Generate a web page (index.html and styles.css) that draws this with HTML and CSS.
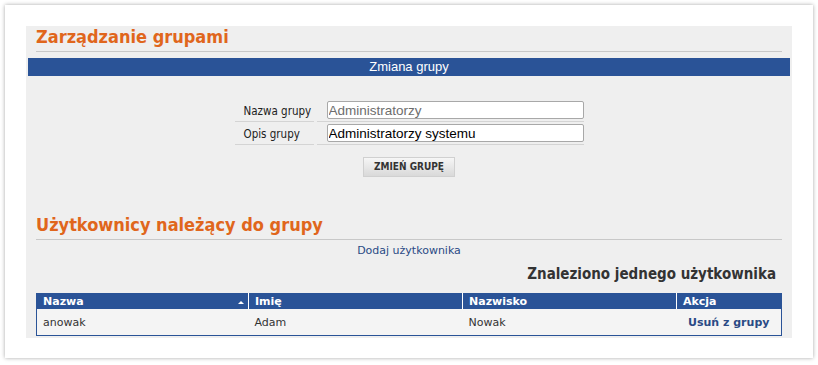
FILE: index.html
```html
<!DOCTYPE html>
<html>
	<head>
		<meta charset="utf-8">
		<title>Zarządzanie grupami</title>
		<link rel="stylesheet" href="styles.css">
	</head>
	<body>
		<div class="card">
			<div class="panel">
				<h1 class="title">Zarządzanie grupami</h1>
				<div class="bar">Zmiana grupy</div>
				<form class="group-form">
					<table class="fields">
						<tr>
							<td class="label">Nazwa grupy</td>
							<td class="field"><input type="text" class="text" value="Administratorzy" disabled></td>
						</tr>
						<tr>
							<td class="label">Opis grupy</td>
							<td class="field"><input type="text" class="text active" value="Administratorzy systemu"></td>
						</tr>
					</table>
					<div class="actions">
						<button type="button" class="button">ZMIEŃ GRUPĘ</button>
					</div>
				</form>
				<h1 class="title second">Użytkownicy należący do grupy</h1>
				<div class="add"><a href="#">Dodaj użytkownika</a></div>
				<div class="found">Znaleziono jednego użytkownika</div>
				<table class="list">
					<thead>
						<tr>
							<th class="sorted">Nazwa <span class="arrow"></span></th>
							<th>Imię</th>
							<th>Nazwisko</th>
							<th class="action">Akcja</th>
						</tr>
					</thead>
					<tbody>
						<tr>
							<td>anowak</td>
							<td>Adam</td>
							<td>Nowak</td>
							<td class="action"><a href="#">Usuń z grupy</a></td>
						</tr>
					</tbody>
				</table>
			</div>
		</div>
	</body>
</html>
```

FILE: styles.css
```css
html, body {
	margin: 0;
	background-color: #ffffff;
}

body {
	padding: 5px;
	font-family: "DejaVu Sans", Verdana, sans-serif;
	color: #333333;
}

.card {
	width: 766px;
	height: 312px;
	padding: 21px 21px 20px 21px;
	background-color: #ffffff;
	box-shadow: 0 0 4px rgba(0, 0, 0, 0.35);
}

.panel {
	height: 312px;
	background-color: #efefef;
	overflow: hidden;
}

.title {
	margin: 0 10px;
	height: 25px;
	line-height: 22px;
	font-family: "DejaVu Sans Condensed", "DejaVu Sans", sans-serif;
	font-size: 18px;
	font-weight: bold;
	color: #e0661c;
	border-bottom: 1px solid #c8c8c8;
}

.bar {
	margin: 6px 2px 0 2px;
	height: 18px;
	line-height: 18px;
	background-color: #2a5397;
	color: #ffffff;
	text-align: center;
	font-family: "Liberation Sans", Arial, sans-serif;
	font-size: 13px;
}

.group-form {
	margin: 0;
	padding-top: 23px;
	height: 115px;
}

.fields {
	margin: 0 auto;
	border-collapse: separate;
	border-spacing: 3px 1px;
}

.fields td {
	border-bottom: 1px solid #d4d4d4;
	height: 20px;
	padding: 0;
}

.label {
	width: 70px;
	padding: 0 0 0 9px !important;
	font-family: "DejaVu Sans Condensed", "DejaVu Sans", sans-serif;
	font-size: 11.5px;
	color: #222222;
}

.field {
	width: 257px;
	padding: 0 0 0 10px !important;
}

.text {
	display: block;
	box-sizing: border-box;
	width: 257px;
	height: 18px;
	margin: 1px 0 2px 0;
	padding: 0 1px;
	border: 1px solid #a8a8a8;
	border-radius: 2px;
	background-color: #ffffff;
	font-family: "Liberation Sans", Arial, sans-serif;
	font-size: 13.5px;
	color: #000000;
}

.text:disabled {
	color: #6d6d6d;
}

.actions {
	text-align: center;
	padding-top: 9px;
}

.button {
	width: 92px;
	height: 20px;
	padding: 0;
	border: 1px solid #d0d0d0;
	background: linear-gradient(#f6f6f6, #d9d9d9);
	font-family: "DejaVu Sans Condensed", "DejaVu Sans", sans-serif;
	font-size: 10px;
	font-weight: bold;
	color: #333333;
}

.add {
	text-align: center;
	font-size: 11px;
	line-height: 18px;
	margin-top: 2px;
}

.add a,
.action a {
	color: #2a4a85;
	text-decoration: none;
}

.found {
	text-align: right;
	margin: 4px 16px 0 0;
	font-family: "DejaVu Sans Condensed", "DejaVu Sans", sans-serif;
	font-size: 15px;
	font-weight: bold;
	color: #333333;
	line-height: 20px;
}

.list {
	margin: 9px 10px 0 10px;
	width: 746px;
	border-collapse: collapse;
	border: 1px solid #2a5397;
	font-size: 11px;
}

.list th {
	position: relative;
	background-color: #2a5397;
	color: #ffffff;
	text-align: left;
	font-weight: bold;
	height: 15px;
	padding: 0 6px;
	border-left: 1px solid #ffffff;
	line-height: 15px;
}

.list th:first-child {
	border-left: none;
}

.list th:nth-child(1) { width: 199px; }
.list th:nth-child(2) { width: 201px; }
.list th:nth-child(3) { width: 201px; }

.arrow {
	position: absolute;
	right: 4px;
	top: 7px;
	width: 0;
	height: 0;
	border-left: 3px solid transparent;
	border-right: 3px solid transparent;
	border-bottom: 3px solid #ffffff;
}

.list td {
	height: 26px;
	padding: 0 6px;
	background-color: #f4f4f4;
	color: #333333;
}

.list td.action {
	text-align: center;
	font-weight: bold;
}

.list td.action a {
	color: #2a4a85;
}
```
